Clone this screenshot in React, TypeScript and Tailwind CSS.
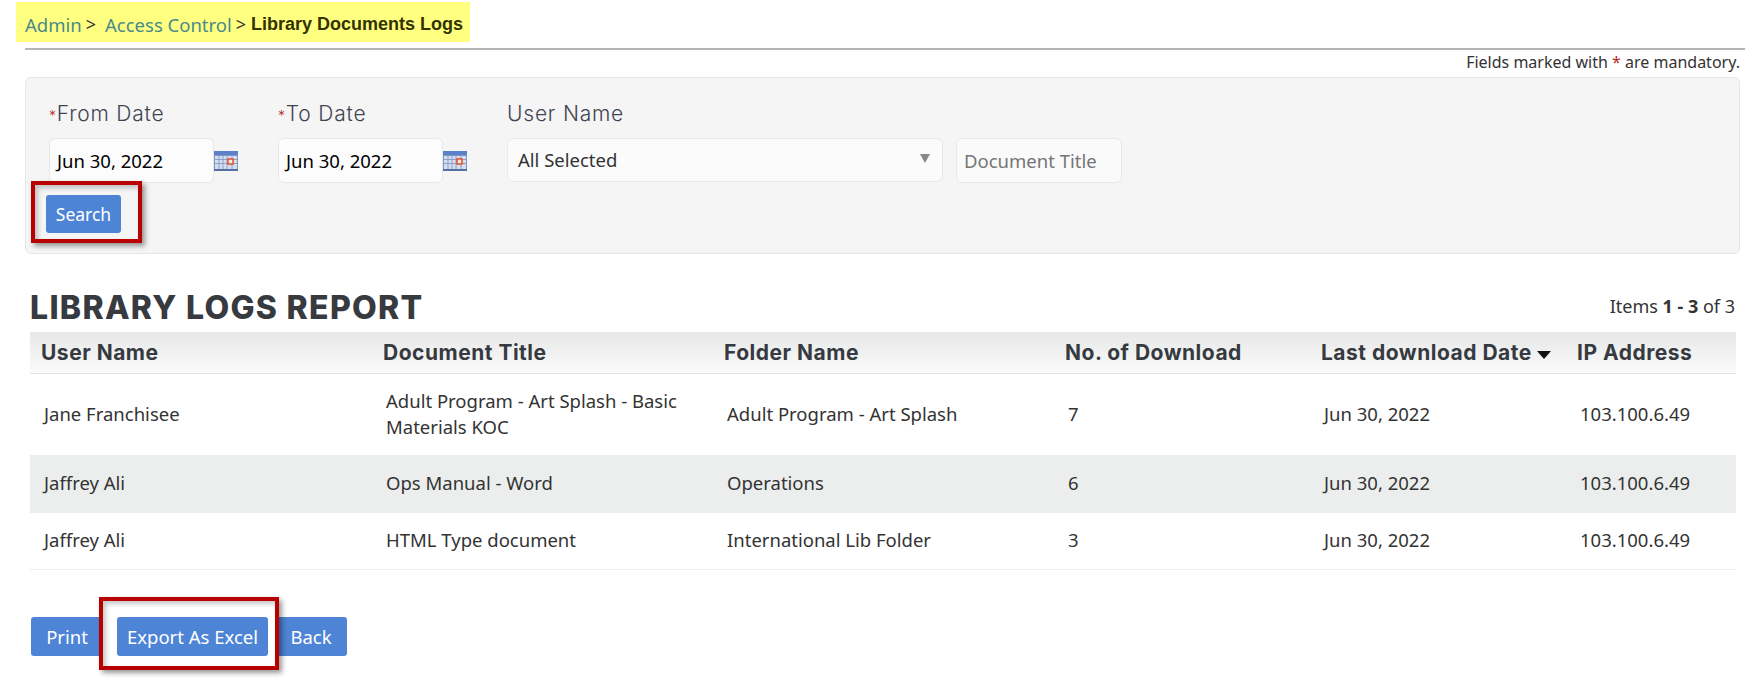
const rows = [
  { user: "Jane Franchisee", title: "Adult Program - Art Splash - Basic Materials KOC", folder: "Adult Program - Art Splash", count: "7", h: "h-[81px] pb-[2px]" },
  { user: "Jaffrey Ali", title: "Ops Manual - Word", folder: "Operations", count: "6", h: "h-[58px] pb-[2px] bg-[#eceeee]" },
  { user: "Jaffrey Ali", title: "HTML Type document", folder: "International Lib Folder", count: "3", h: "h-[57px] pb-[2px] border-b border-[#eeeeee]" },
]

function CalendarIcon() {
  return (
    <svg width="24" height="20" viewBox="0 0 24 20" className="shrink-0">
      <rect x="0" y="0" width="24" height="20" fill="#7c96c8" />
      <rect x="0" y="0" width="24" height="4" fill="#5b82c8" />
      <path d="M1 5h22v13H1z" fill="#d5deee" />
      <path d="M5 4v15M9 4v15M13 4v15M18 4v15M1 8.500h22M1 12.500h22" stroke="#8aa0c8" strokeWidth="1" />
      <rect x="14" y="8" width="5" height="5" fill="#f6e6e0" stroke="#e0502e" strokeWidth="1.500" />
      <rect x="0" y="18" width="24" height="2" fill="#53709f" />
    </svg>
  )
}

function RedBox({ className }: { className: string }) {
  return <div className={`absolute border-[4px] border-[#b90000] shadow-[3px_3px_5px_rgba(0,0,0,0.4),inset_3px_3px_5px_rgba(0,0,0,0.22)] pointer-events-none ${className}`} />
}

function DateField({ label, width }: { label: string; width: string }) {
  return (
    <div className={width}>
      <div className="pt-[1px] font-['Inter',sans-serif] font-light text-[21px] tracking-[0.8px] leading-[24px] text-[#3e4450] h-[24px] mb-[13px]">
        <span className="text-[#b92c28] text-[14px]">*</span>
        {label}
      </div>
      <div className="flex items-center">
        <div className="w-[165px] h-[45px] bg-[#fcfcfc] border border-[#e8e8e8] rounded-[6px] pl-[7px] flex items-center text-[18.500px] text-black">
          Jun 30, 2022
        </div>
        <CalendarIcon />
      </div>
    </div>
  )
}

export default function App() {
  const btn = "h-[39px] bg-[#4e84d6] text-white rounded-[3px] text-[18.500px] flex items-center justify-center"
  const cols = ["w-[342px]", "w-[341px]", "w-[341px]", "w-[256px]", "w-[256px]"]

  return (
    <div className="w-[1745px] h-[684px] bg-white overflow-hidden font-['Noto_Sans',sans-serif] text-[#333333] relative">
      <div className="pt-[2px] pl-[16px]">
        <div className="w-[454px] h-[40px] bg-[#ffff80] pl-[9px] pt-[5px] flex items-center text-[18.500px] text-[#4a8a8a]">
          <span>Admin</span>
          <span className="ml-[4px] text-[#333333] text-[18px]">&gt;</span>
          <span className="ml-[9px]">Access Control</span>
          <span className="ml-[4px] text-[#333333] text-[18px]">&gt;</span>
          <span className="ml-[5px] font-['Liberation_Sans',sans-serif] font-bold text-[18px] text-[#333300]">Library Documents Logs</span>
        </div>
      </div>
      <div className="ml-[25px] mt-[6px] h-[2px] bg-[#b5b5b5]" />
      <div className="text-right pr-[5px] text-[16px] leading-[24px] h-[27px]">
        Fields marked with <span className="text-[#b92c28]">*</span> are mandatory.
      </div>

      <div className="relative ml-[25px] mr-[5px] h-[177px] bg-[#f5f5f5] border border-[#e6e6e6] rounded-[6px] pl-[23px] pt-[23px]">
        <div className="flex">
          <DateField label="From Date" width="w-[229px]" />
          <DateField label="To Date" width="w-[229px]" />
          <div className="w-[436px]">
            <div className="pt-[1px] font-['Inter',sans-serif] font-light text-[21px] tracking-[0.8px] leading-[24px] text-[#3e4450] h-[24px] mb-[13px]">User Name</div>
            <div className="h-[44px] bg-[#fbfbfb] border border-[#e8e8e8] rounded-[6px] pl-[10px] pr-[12px] flex items-center justify-between text-[18.500px]">
              <span>All Selected</span>
              <svg width="10" height="9" viewBox="0 0 10 9" className="-mt-[4px]"><path d="M0 0h10L5 9z" fill="#888888" /></svg>
            </div>
          </div>
          <div className="ml-[13px] mt-[37px] w-[166px] h-[45px] bg-[#fafafa] border border-[#e8e8e8] rounded-[6px] pl-[7px] flex items-center text-[18.500px] text-[#757575]">
            Document Title
          </div>
        </div>
        <div className="relative mt-[12px] -ml-[3px] w-[75px]">
          <div className={`${btn} w-[75px] !h-[38px] !text-[17.500px]`}>Search</div>
          <RedBox className="-left-[15px] -top-[14px] w-[111px] h-[62px]" />
        </div>
      </div>

      <div className="flex items-center justify-between ml-[30px] mr-[10px] mt-[29px] h-[49px]">
        <h1 className="font-['Inter',sans-serif] font-extrabold text-[32px] text-[#373a3f] tracking-[1.300px]">LIBRARY LOGS REPORT</h1>
        <div className="text-[18px] -mt-[2px]">
          Items <b>1 - 3</b> of 3
        </div>
      </div>

      <div className="ml-[30px] mr-[9px]">
        <div className="h-[42px] pt-[1px] flex items-center bg-gradient-to-b from-[#e6e7e7] to-[#fbfbfb] border-b border-[#e4e4e4] pl-[11px] font-['Inter',sans-serif] font-bold text-[21px] tracking-[0.5px] text-[#363a40]">
          <div className={cols[0]}>User Name</div>
          <div className={cols[1]}>Document Title</div>
          <div className={cols[2]}>Folder Name</div>
          <div className={cols[3]}>No. of Download</div>
          <div className={`${cols[4]} flex items-center`}>
            Last download Date
            <svg width="14" height="8" viewBox="0 0 14 8" className="ml-[5px] mt-[3px] shrink-0"><path d="M0 0h14L7 8z" fill="#111111" /></svg>
          </div>
          <div>IP Address</div>
        </div>
        {rows.map((r, i) => (
          <div key={i} className={`flex items-center pl-[14px] text-[18.500px] leading-[26px] ${r.h}`}>
            <div className={cols[0]}>{r.user}</div>
            <div className={`${cols[1]} pr-[30px]`}>{r.title}</div>
            <div className={cols[2]}>{r.folder}</div>
            <div className={cols[3]}>{r.count}</div>
            <div className={cols[4]}>Jun 30, 2022</div>
            <div>103.100.6.49</div>
          </div>
        ))}
      </div>

      <div className="relative flex ml-[31px] mt-[47px]">
        <div className={`${btn} w-[72px]`}>Print</div>
        <div className={`${btn} w-[151px] ml-[14px]`}>Export As Excel</div>
        <div className={`${btn} w-[72px] ml-[7px]`}>Back</div>
        <RedBox className="left-[68px] -top-[20px] w-[180px] h-[73px]" />
      </div>
    </div>
  )
}
